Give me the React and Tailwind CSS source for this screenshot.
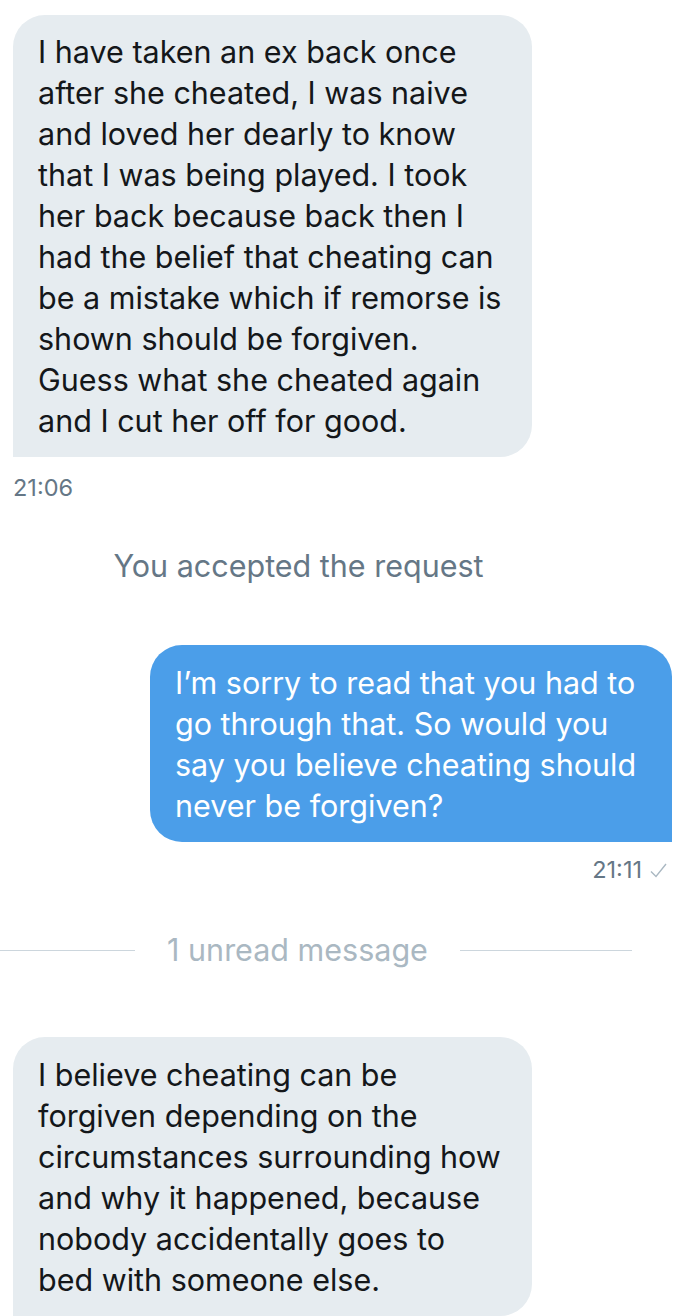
const font = { fontFamily: '"Inter", "Roboto", "Liberation Sans", sans-serif' };

function Lines({ lines }) {
  return lines.map((l, i) => (
    <div key={i} className="whitespace-nowrap">{l}</div>
  ));
}

export default function App() {
  return (
    <div className="w-[687px] h-[1316px] bg-white overflow-hidden" style={font}>
      <div className="flex flex-col">
        <div className="ml-[13px] mt-[15px] w-[519px] bg-[#e6ecf0] rounded-t-[32px] rounded-br-[32px] pl-[25px] pt-[16px] pb-[16px] text-[30.5px] leading-[41px] text-[#14171a]">
          <Lines lines={[
            "I have taken an ex back once",
            "after she cheated, I was naive",
            "and loved her dearly to know",
            "that I was being played. I took",
            "her back because back then I",
            "had the belief that cheating can",
            "be a mistake which if remorse is",
            "shown should be forgiven.",
            "Guess what she cheated again",
            "and I cut her off for good.",
          ]} />
        </div>
        <div className="ml-[13px] mt-[18px] text-[23.5px] leading-[26px] text-[#657786]">21:06</div>
        <div className="mt-[48px] w-full text-center pr-[90px] text-[30.5px] leading-[34px] text-[#657786]">You accepted the request</div>
        <div className="self-end mr-[15px] mt-[62px] w-[522px] bg-[#4b9ee9] rounded-t-[32px] rounded-bl-[32px] pl-[25px] pt-[17px] pb-[16px] text-[30.5px] leading-[41px] text-white">
          <Lines lines={[
            "I’m sorry to read that you had to",
            "go through that. So would you",
            "say you believe cheating should",
            "never be forgiven?",
          ]} />
        </div>
        <div className="self-end mr-[19px] mt-[15px] flex items-center gap-[7px] text-[23.5px] leading-[26px] text-[#657786]">
          <span>21:11</span>
          <svg width="19" height="17" viewBox="0 0 19 17" fill="none">
            <path d="M2 9.5 L7 14.5 L17 2" stroke="#aab8c2" strokeWidth="1.4" />
          </svg>
        </div>
        <div className="mt-[50px] flex items-center h-[34px]">
          <div className="w-[135px] h-px bg-[#ccd6dd]" />
          <div className="w-[325px] text-center text-[30.5px] leading-[34px] text-[#aab8c2] whitespace-nowrap">1 unread message</div>
          <div className="w-[172px] h-px bg-[#ccd6dd]" />
        </div>
        <div className="ml-[13px] mt-[70px] w-[519px] bg-[#e6ecf0] rounded-t-[32px] rounded-br-[32px] pl-[25px] pt-[17px] pb-[16px] text-[30.5px] leading-[41px] text-[#14171a]">
          <Lines lines={[
            "I believe cheating can be",
            "forgiven depending on the",
            "circumstances surrounding how",
            "and why it happened, because",
            "nobody accidentally goes to",
            "bed with someone else.",
          ]} />
        </div>
      </div>
    </div>
  );
}
